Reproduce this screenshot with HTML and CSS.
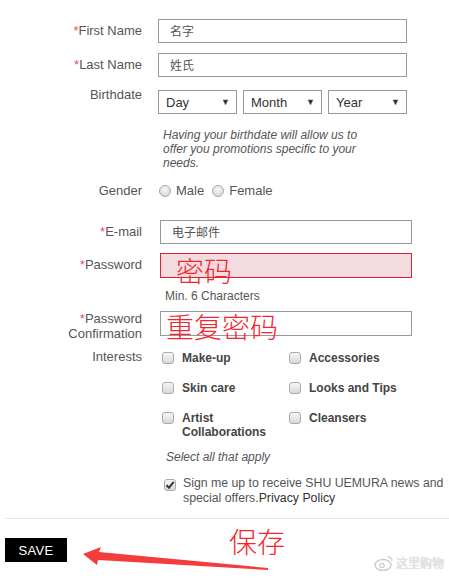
FILE: index.html
```html
<!DOCTYPE html>
<html>
<head>
<meta charset="utf-8">
<link rel="stylesheet" href="styles.css">
</head>
<body>
<div class="page">
  <div class="row r-first">
    <div class="label"><span class="req">*</span>First Name</div>
    <div class="field f-a"><div class="input w1">名字</div></div>
  </div>
  <div class="row r-last">
    <div class="label"><span class="req">*</span>Last Name</div>
    <div class="field f-a"><div class="input w1">姓氏</div></div>
  </div>
  <div class="row r-birth">
    <div class="label lb-birth">Birthdate</div>
    <div class="field f-a selects">
      <div class="select s1"><span>Day</span><span class="arr">▼</span></div>
      <div class="select s2"><span>Month</span><span class="arr">▼</span></div>
      <div class="select s3"><span>Year</span><span class="arr">▼</span></div>
    </div>
  </div>
  <p class="help">Having your birthdate will allow us to<br>offer you promotions specific to your<br>needs.</p>
  <div class="row r-gender">
    <div class="label">Gender</div>
    <div class="field f-a radios">
      <span class="radio"></span><span class="rtxt">Male</span>
      <span class="radio r2"></span><span class="rtxt">Female</span>
    </div>
  </div>
  <div class="row r-email">
    <div class="label lb-in"><span class="req">*</span>E-mail</div>
    <div class="field f-b"><div class="input w2">电子邮件</div></div>
  </div>
  <div class="row r-pass">
    <div class="label lb-in"><span class="req">*</span>Password</div>
    <div class="field f-b"><div class="input w2 err"><span class="note n1">密码</span></div></div>
  </div>
  <p class="min">Min. 6 Characters</p>
  <div class="row r-conf">
    <div class="label lb-conf"><span class="req">*</span>Password<br>Confirmation</div>
    <div class="field f-b"><div class="input w2 conf"><span class="note n2">重复密码</span></div></div>
  </div>
  <div class="row r-int">
    <div class="label">Interests</div>
    <div class="field grid">
      <div class="item"><span class="cb"></span><span class="itxt">Make-up</span></div>
      <div class="item"><span class="cb"></span><span class="itxt">Accessories</span></div>
      <div class="item"><span class="cb"></span><span class="itxt">Skin care</span></div>
      <div class="item"><span class="cb"></span><span class="itxt">Looks and Tips</span></div>
      <div class="item"><span class="cb"></span><span class="itxt">Artist<br>Collaborations</span></div>
      <div class="item"><span class="cb"></span><span class="itxt">Cleansers</span></div>
    </div>
  </div>
  <p class="selall">Select all that apply</p>
  <div class="signup">
    <span class="cb checked"><svg width="10" height="10" viewBox="0 0 10 10"><path d="M1.5 5.2 L4 7.8 L8.6 1.8" fill="none" stroke="#333" stroke-width="2"/></svg></span>
    <p class="stxt">Sign me up to receive SHU UEMURA news and<br>special offers.<span class="pp">Privacy Policy</span></p>
  </div>
  <div class="divider"></div>
  <div class="actions"><button class="save">SAVE</button></div>

  <span class="note n3">保存</span>
  <svg class="arrow" width="200" height="30" viewBox="0 0 200 30">
    <polygon points="0,9 18,2 16,7 185,23 185,25 15,15 14,20" fill="#f33c3c"/>
  </svg>
  <div class="wm"><svg width="20" height="16" viewBox="0 0 20 16"><ellipse cx="9" cy="10" rx="8" ry="5.5" fill="none" stroke="#ccc" stroke-width="1.4"/><circle cx="8" cy="10.5" r="2.2" fill="none" stroke="#ccc" stroke-width="1.2"/><path d="M14 2 a4 4 0 0 1 4 4" fill="none" stroke="#ccc" stroke-width="1.3"/></svg><span>这里购物</span></div>
</div>
</body>
</html>
```
FILE: styles.css
```css
* { box-sizing: border-box; }
html, body { margin: 0; padding: 0; background: #fff; }
body {
  font-family: "Liberation Sans", Arial, "Noto Sans CJK SC", sans-serif;
  font-size: 13px;
  color: #555;
}
.page {
  position: relative;
  width: 449px;
  height: 579px;
  padding-top: 19px;
  overflow: hidden;
}
p { margin: 0; }
.row { display: flex; align-items: flex-start; }
.label {
  width: 142px;
  text-align: right;
  line-height: 16px;
  padding-top: 4px;
  color: #555;
  flex-shrink: 0;
}
.req { color: #e4506a; }
.field { display: flex; }
.f-a { margin-left: 16px; }
.f-b { margin-left: 18px; }
.input {
  height: 24px;
  border: 1px solid #999;
  background: #fff;
  padding-left: 11px;
  line-height: 22px;
  font-family: "Noto Sans CJK SC", sans-serif;
  font-size: 12px;
  color: #555;
  position: relative;
}
.w1 { width: 249px; }
.w2 { width: 252px; }
.r-last { margin-top: 10px; }
.r-birth { margin-top: 10px; }
.lb-birth { padding-top: 0; }
.selects { gap: 6px; margin-top: 3px; }
.select {
  height: 24px;
  border: 1px solid #999;
  display: flex;
  align-items: center;
  justify-content: space-between;
  padding: 0 6px 0 7px;
  color: #333;
  font-size: 13px;
}
.s1 { width: 79px; }
.s2 { width: 79px; }
.s3 { width: 79px; }
.arr { font-size: 9px; color: #333; }
.help {
  margin: 14px 0 0 163px;
  font-style: italic;
  font-size: 12px;
  line-height: 14px;
  color: #555;
}
.r-gender { margin-top: 12px; }
.r-gender .label { padding-top: 1px; }
.radios { align-items: center; height: 16px; margin-left: 17px; margin-top: 1px; }
.radio {
  width: 12px; height: 12px;
  border-radius: 50%;
  border: 1px solid #a8a8a8;
  background: radial-gradient(circle at 50% 35%, #f6f6f6, #d4d4d4);
  margin-right: 5px;
}
.r2 { margin-left: 8px; }
.rtxt { color: #555; line-height: 16px; }
.r-email { margin-top: 21px; }
.lb-in { padding-top: 4px; }
.r-pass { margin-top: 9px; }
.r-pass .input { height: 25px; }
.err { border-color: #e0202a; background: #f2dcdf; }
.note {
  font-family: "Noto Sans CJK SC", sans-serif;
  font-weight: 300;
  color: #f2262e;
  font-size: 28px;
  line-height: 28px;
  position: absolute;
  white-space: nowrap;
}
.n1 { left: 15px; top: 2px; }
.n2 { left: 5px; top: 0px; }
.n3 { left: 229px; top: 527px; }
.min {
  margin: 11px 0 0 165px;
  font-size: 12px;
  line-height: 14px;
  color: #555;
}
.r-conf { margin-top: 8px; }
.lb-conf { padding-top: 0; line-height: 15px; }
.conf { height: 25px; }
.r-int { margin-top: 8px; }
.r-int .label { padding-top: 0; }
.grid {
  margin-left: 20px;
  margin-top: 2px;
  display: grid;
  grid-template-columns: 127px 140px;
  row-gap: 16px;
}
.item { display: flex; align-items: flex-start; }
.cb {
  width: 12px; height: 12px;
  border: 1px solid #aaa;
  border-radius: 3px;
  background: linear-gradient(#f7f7f7, #d8d8d8);
  flex-shrink: 0;
  margin-top: 1px;
  display: flex;
  align-items: center;
  justify-content: center;
}
.itxt {
  margin-left: 8px;
  font-weight: bold;
  font-size: 12px;
  line-height: 14px;
  color: #444;
}
.selall {
  margin: 11px 0 0 166px;
  font-style: italic;
  font-size: 12px;
  line-height: 14px;
  color: #555;
}
.signup {
  display: flex;
  align-items: flex-start;
  margin: 12px 0 0 164px;
}
.signup .cb { margin-top: 3px; }
.stxt { margin-left: 7px; line-height: 15px; font-size: 12.3px; color: #555; white-space: nowrap; }
.pp { color: #333; }
.divider {
  margin: 12px 0 0 5px;
  height: 1px;
  background: #e6e6e6;
}
.actions { padding: 19px 0 0 5px; }
.save {
  display: block;
  width: 62px;
  height: 24px;
  border: 0;
  background: #000;
  color: #fff;
  font-family: "Liberation Sans", Arial, sans-serif;
  font-size: 13px;
  letter-spacing: 0.3px;
  padding: 0;
}
.arrow { position: absolute; left: 83px; top: 545px; }
.wm {
  position: absolute;
  left: 374px;
  top: 554px;
  display: flex;
  align-items: center;
  gap: 2px;
  font-family: "Noto Sans CJK SC", sans-serif;
  font-size: 12px;
  color: #e6e6e6;
  text-shadow: 0 0 1px #bbb;
}
```
